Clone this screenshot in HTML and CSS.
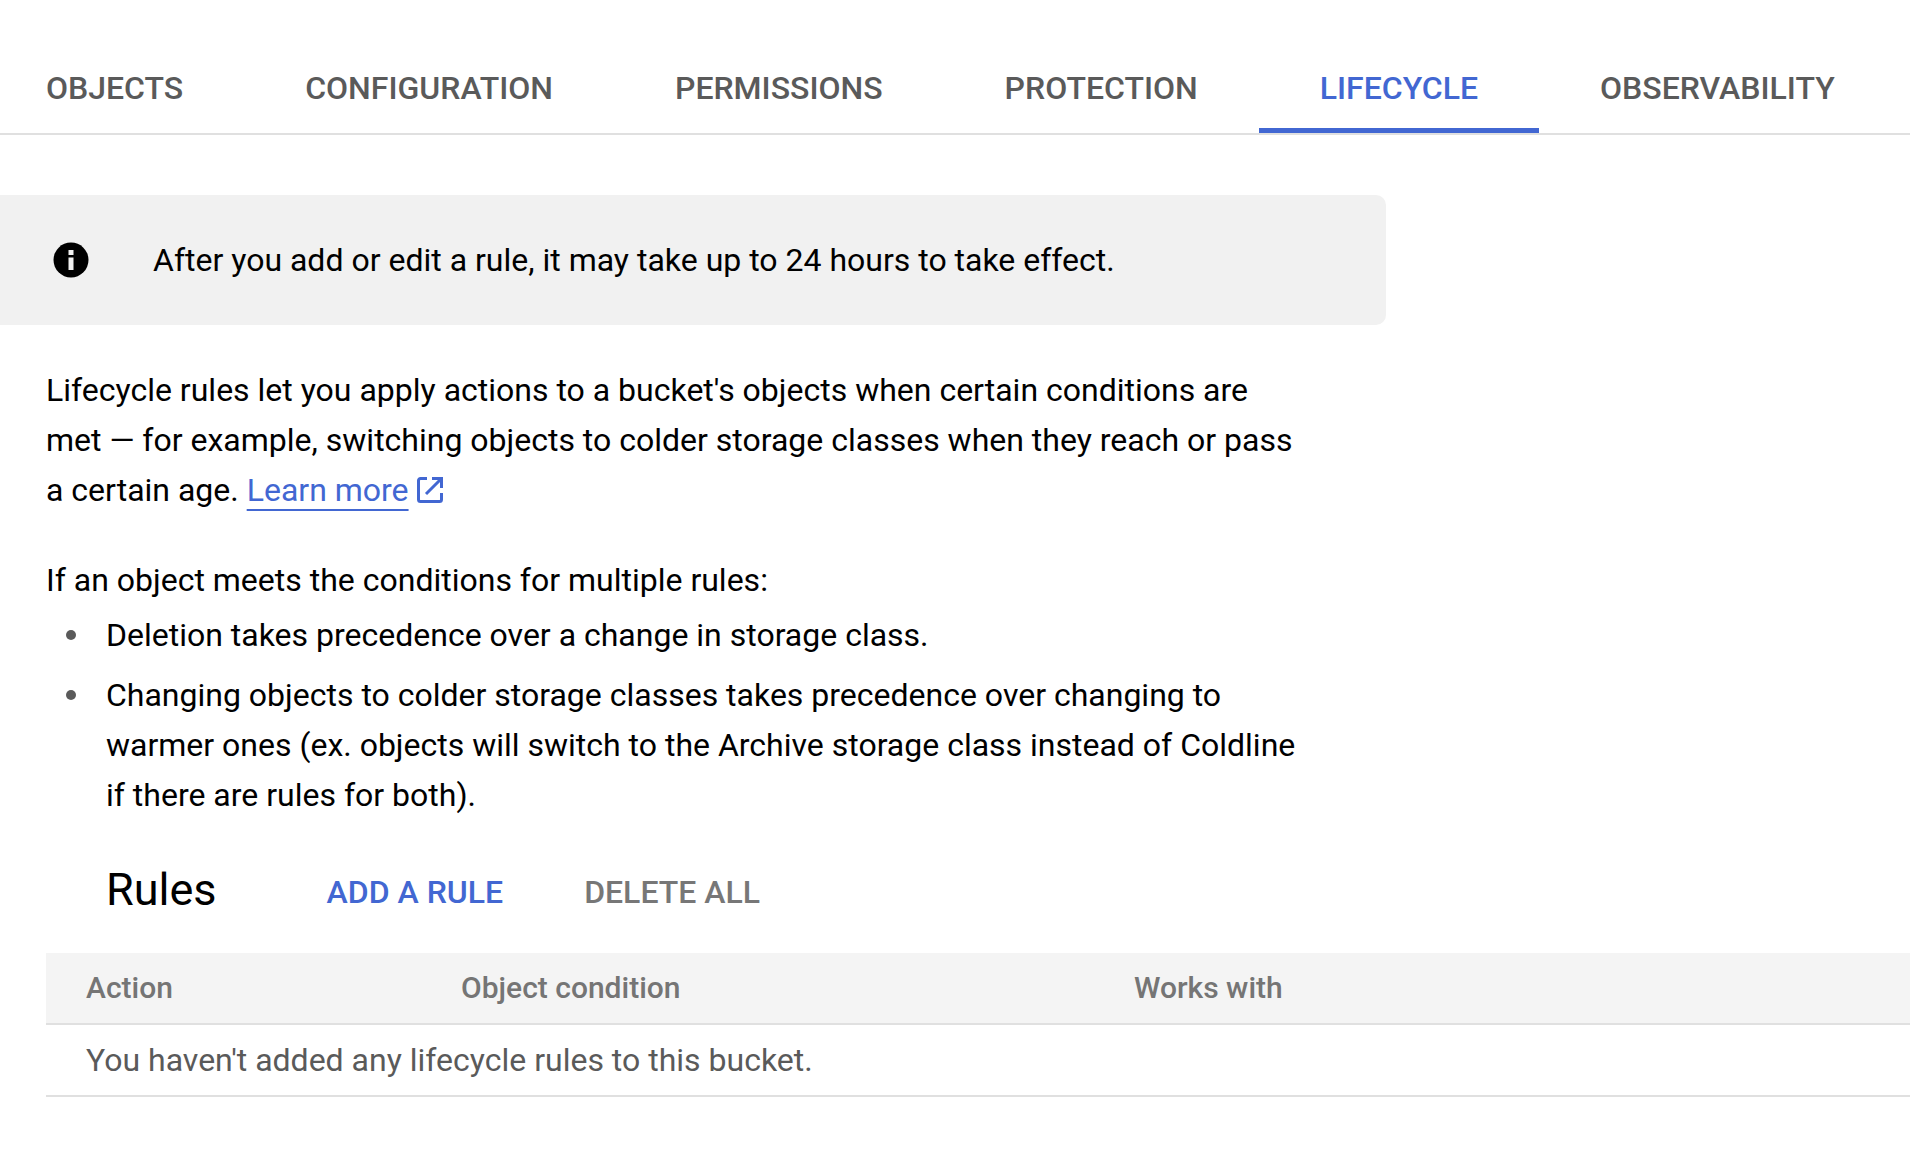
FILE: index.html
```html
<!DOCTYPE html>
<html lang="en">
<head>
<meta charset="utf-8">
<meta name="viewport" content="width=device-width, initial-scale=1">
<title>Bucket lifecycle</title>
<link rel="stylesheet" href="styles.css">
</head>
<body>
<nav class="tabs" aria-label="Bucket details">
  <a class="tab" href="#objects">OBJECTS</a>
  <a class="tab" href="#configuration">CONFIGURATION</a>
  <a class="tab" href="#permissions">PERMISSIONS</a>
  <a class="tab" href="#protection">PROTECTION</a>
  <a class="tab tab-active" href="#lifecycle" aria-current="page">LIFECYCLE</a>
  <a class="tab" href="#observability">OBSERVABILITY</a>
</nav>
<main>
  <div class="notice" role="status">
    <svg class="notice-icon" viewBox="0 0 36 36" aria-hidden="true">
      <circle cx="18" cy="18" r="17.5" fill="#000"/>
      <path d="M15.5 8h5v5h-5zM15.5 15.5h5V28h-5z" fill="#f1f1f1"/>
    </svg>
    <p>After you add or edit a rule, it may take up to 24 hours to take effect.</p>
  </div>
  <section class="intro">
    <p class="intro-text">Lifecycle rules let you apply actions to a bucket's objects when certain conditions are met — for example, switching objects to colder storage classes when they reach or pass a certain age. <a class="learn-more" href="#learn-more">Learn more</a><svg class="external-icon" viewBox="0 0 26 26" aria-hidden="true"><path d="M10 1.5H3.5a2 2 0 0 0-2 2v19a2 2 0 0 0 2 2h19a2 2 0 0 0 2-2V16M15 1.5h9.5V11M24 2 9 17"/></svg></p>
    <p>If an object meets the conditions for multiple rules:</p>
    <ul class="precedence">
      <li>Deletion takes precedence over a change in storage class.</li>
      <li>Changing objects to colder storage classes takes precedence over changing to warmer ones (ex. objects will switch to the Archive storage class instead of Coldline if there are rules for both).</li>
    </ul>
  </section>
  <section class="rules">
    <header class="rules-bar">
      <h2>Rules</h2>
      <button class="action" type="button">ADD A RULE</button>
      <button class="action" type="button" disabled>DELETE ALL</button>
    </header>
    <table class="rules-table">
      <colgroup><col class="col-action"><col class="col-condition"><col></colgroup>
      <thead>
        <tr><th scope="col">Action</th><th scope="col">Object condition</th><th scope="col">Works with</th></tr>
      </thead>
      <tbody>
        <tr><td colspan="3">You haven't added any lifecycle rules to this bucket.</td></tr>
      </tbody>
    </table>
  </section>
</main>
</body>
</html>
```
FILE: styles.css
```css
* {
  box-sizing: border-box;
}

body {
  margin: 0;
  background: #fff;
  color: #000;
  font: 400 32px/50px Roboto, sans-serif;
}

p,
h2,
ul {
  margin: 0;
  padding: 0;
}

.tabs {
  display: flex;
  padding-top: 45px;
  border-bottom: 2px solid #e0e0e0;
  overflow: hidden;
}

.tab {
  padding: 18px 61px 15px;
  border-bottom: 5px solid transparent;
  color: #5a5a5a;
  font-weight: 500;
  text-decoration: none;
  white-space: nowrap;
}

.tab:first-child {
  padding-left: 46px;
}

.tab-active {
  border-color: #4267d2;
  color: #4267d2;
}

.notice {
  display: flex;
  align-items: center;
  gap: 64px;
  max-width: 1386px;
  margin-top: 60px;
  padding: 40px 53px;
  border-radius: 0 10px 10px 0;
  background: #f1f1f1;
}

.notice-icon {
  flex: none;
  width: 36px;
  height: 36px;
}

.intro {
  max-width: 1304px;
  padding: 40px 0 0 46px;
}

.intro-text {
  margin-bottom: 40px;
}

.learn-more {
  color: #4267d2;
  text-decoration: underline 2px;
  text-underline-offset: 8px;
  text-decoration-skip-ink: none;
}

.external-icon {
  width: 26px;
  height: 26px;
  margin-left: 8px;
  vertical-align: -2px;
  fill: none;
  stroke: #4267d2;
  stroke-width: 3;
}

.precedence {
  display: grid;
  gap: 10px;
  padding-top: 5px;
  list-style: none;
}

.precedence li {
  display: grid;
  grid-template-columns: 10px 1fr;
  gap: 30px;
  padding-left: 20px;
}

.precedence li::before {
  content: "";
  height: 10px;
  margin-top: 20px;
  border-radius: 50%;
  background: #5a5a5a;
}

.rules {
  padding: 40px 0 0 46px;
}

.rules-bar {
  display: flex;
  align-items: center;
  gap: 81px;
  padding: 0 60px 33px;
}

.rules-bar h2 {
  margin-right: 29px;
  font-size: 45px;
  font-weight: 400;
  line-height: 60px;
}

.action {
  padding: 4px 0 0;
  border: 0;
  background: none;
  color: #4267d2;
  font: inherit;
  font-weight: 500;
}

.action:disabled {
  color: #777;
}

.rules-table {
  width: 100%;
  border-collapse: collapse;
  table-layout: fixed;
  text-align: left;
}

.rules-table th,
.rules-table td {
  padding: 10px 40px;
  border-bottom: 2px solid #e0e0e0;
}

.rules-table th {
  background: #f4f4f4;
  color: #757575;
  font-size: 30px;
  font-weight: 500;
}

.rules-table td {
  color: #5a5a5a;
}

.col-action {
  width: 375px;
}

.col-condition {
  width: 673px;
}
```
